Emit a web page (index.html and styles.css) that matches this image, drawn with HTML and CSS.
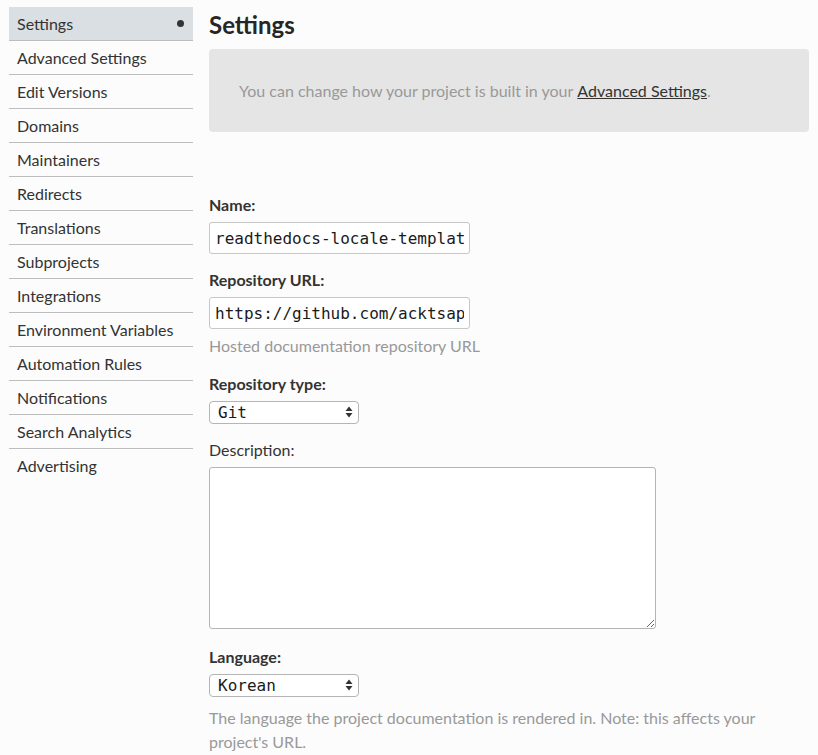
FILE: index.html
```html
<!DOCTYPE html>
<html>
<head>
<meta charset="utf-8">
<link rel="stylesheet" href="styles.css">
</head>
<body>
<div class="page">
  <nav class="sidebar">
    <a class="nav-item active">Settings<span class="dot"></span></a>
    <a class="nav-item">Advanced Settings</a>
    <a class="nav-item">Edit Versions</a>
    <a class="nav-item">Domains</a>
    <a class="nav-item">Maintainers</a>
    <a class="nav-item">Redirects</a>
    <a class="nav-item">Translations</a>
    <a class="nav-item">Subprojects</a>
    <a class="nav-item">Integrations</a>
    <a class="nav-item">Environment Variables</a>
    <a class="nav-item">Automation Rules</a>
    <a class="nav-item">Notifications</a>
    <a class="nav-item">Search Analytics</a>
    <a class="nav-item last">Advertising</a>
  </nav>
  <main class="main">
    <h1 class="title">Settings</h1>
    <div class="notice">You can change how your project is built in your <a class="link">Advanced Settings</a>.</div>
    <form class="form">
      <div class="field">
        <label class="label">Name:</label>
        <input class="input" type="text" value="readthedocs-locale-template">
      </div>
      <div class="field">
        <label class="label">Repository URL:</label>
        <input class="input" type="text" value="https://github.com/acktsap/readthedocs-locale-template">
        <p class="help">Hosted documentation repository URL</p>
      </div>
      <div class="field">
        <label class="label">Repository type:</label>
        <div class="select-wrap">
          <select class="select"><option>Git</option></select>
          <svg class="arrows" width="8" height="12" viewBox="0 0 8 12"><path d="M4 0.5 L7.5 5 L0.5 5 Z M4 11.5 L7.5 7 L0.5 7 Z" fill="#333"/></svg>
        </div>
      </div>
      <div class="field field-desc">
        <label class="label light">Description:</label>
        <textarea class="textarea"></textarea>
      </div>
      <div class="field">
        <label class="label">Language:</label>
        <div class="select-wrap">
          <select class="select"><option>Korean</option></select>
          <svg class="arrows" width="8" height="12" viewBox="0 0 8 12"><path d="M4 0.5 L7.5 5 L0.5 5 Z M4 11.5 L7.5 7 L0.5 7 Z" fill="#333"/></svg>
        </div>
        <p class="help help-lang">The language the project documentation is rendered in. Note: this affects your project's URL.</p>
      </div>
    </form>
  </main>
</div>
</body>
</html>
```

FILE: styles.css
```css
html, body {
  margin: 0;
  padding: 0;
  background: #fcfcfc;
  font-family: Lato, "Open Sans", sans-serif;
  color: #333;
}
.page {
  display: flex;
  gap: 16px;
  padding: 7px 9px 0 9px;
}
.sidebar {
  width: 184px;
  flex: none;
  display: flex;
  flex-direction: column;
}
.nav-item {
  display: flex;
  align-items: center;
  justify-content: space-between;
  height: 33px;
  padding: 0 8px;
  font-size: 16px;
  color: #333;
  border-bottom: 1px solid #bdbdbd;
}
.nav-item.last {
  border-bottom: none;
}
.nav-item.active {
  background: #d9dfe2;
}
.dot {
  width: 7px;
  height: 7px;
  border-radius: 50%;
  background: #333;
  margin-right: 1px;
}
.main {
  flex: 1;
  min-width: 0;
}
.title {
  margin: 0;
  font-size: 24px;
  font-weight: 700;
  line-height: 36px;
  color: #262626;
}
.notice {
  margin-top: 6px;
  background: #e5e5e5;
  border-radius: 4px;
  height: 83px;
  box-sizing: border-box;
  padding: 0 30px;
  display: flex;
  align-items: center;
  font-size: 16px;
  color: #999;
}
.link {
  color: #333;
  text-decoration: underline;
  margin-left: 4px;
}
.form {
  margin-top: 61px;
}
.field {
  margin-bottom: 14px;
}
.field-desc {
  margin-bottom: 16px;
}
.label {
  display: block;
  font-size: 16px;
  font-weight: 700;
  line-height: 24px;
  margin-bottom: 5px;
  color: #333;
}
.label.light {
  font-weight: 400;
}
.input {
  display: block;
  box-sizing: border-box;
  width: 261px;
  height: 32px;
  padding: 0 5px 0 5px;
  border: 1px solid #c7c7c7;
  border-radius: 3px;
  background: #fff;
  font-family: "DejaVu Sans Mono", monospace;
  font-size: 16px;
  color: #1a1a1a;
}
.help {
  margin: 5px 0 0;
  font-size: 16px;
  line-height: 24px;
  color: #999;
}
.help-lang {
  margin-top: 9px;
  max-width: 580px;
}
.select-wrap {
  position: relative;
  width: 150px;
  height: 23px;
}
.select {
  appearance: none;
  -webkit-appearance: none;
  box-sizing: border-box;
  width: 150px;
  height: 23px;
  padding: 0 0 0 8px;
  border: 1px solid #b5b5b5;
  border-radius: 4px;
  background: #fff;
  font-family: "DejaVu Sans Mono", monospace;
  font-size: 16px;
  color: #1a1a1a;
}
.arrows {
  position: absolute;
  right: 6px;
  top: 5px;
  pointer-events: none;
}
.textarea {
  display: block;
  box-sizing: border-box;
  width: 447px;
  height: 162px;
  border: 1px solid #b5b5b5;
  border-radius: 3px;
  background: #fff;
}
```
